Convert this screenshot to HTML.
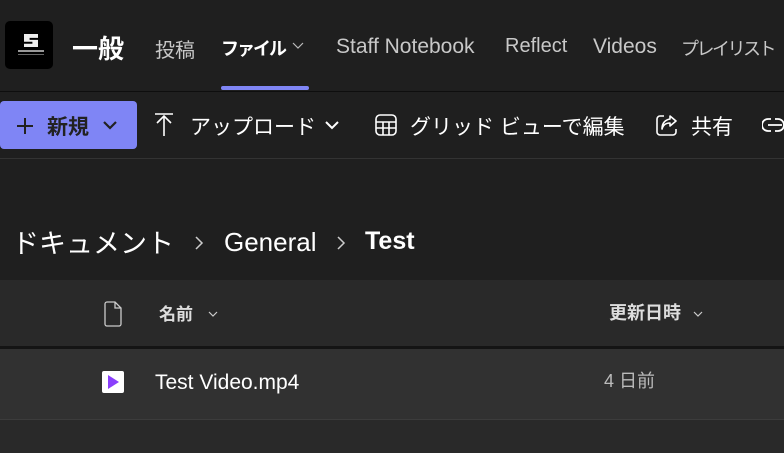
<!DOCTYPE html>
<html><head><meta charset="utf-8"><style>
*{margin:0;padding:0;box-sizing:border-box}
body{width:784px;height:453px;overflow:hidden;background:#1f1f1f;color:#fff;font-family:"Liberation Sans","Noto Sans CJK JP",sans-serif;position:relative}
.a{position:absolute;white-space:nowrap}
svg{position:absolute}
</style></head><body>
<div class="a" style="left:5px;top:21px;width:48px;height:48px;background:#000;border-radius:5px"></div>
<div class="a" style="left:24px;top:34px;width:14px;height:13px;background:#eee;clip-path:polygon(0 0,100% 0,100% 30%,40% 30%,40% 45%,100% 45%,100% 100%,0 100%,0 75%,60% 75%,60% 60%,0 60%)"></div>
<div class="a" style="left:18px;top:50px;width:26px;height:2px;background:#999"></div>
<div class="a" style="left:18px;top:54px;width:26px;height:1px;background:#666"></div>
<div class="a" style="left:72px;top:29px;font-size:26px;font-weight:bold">一般</div>
<div class="a" style="left:155px;top:34px;font-size:20px;color:#c8c8c8">投稿</div>
<div class="a" style="left:221px;top:35px;font-size:18px;font-weight:bold;letter-spacing:-2px">ファイル</div>
<svg style="left:292px;top:42px" width="12" height="8"><path d="M1 1l5 5 5-5" stroke="#bbb" fill="none" stroke-width="1.2"/></svg>
<div class="a" style="left:221px;top:86px;width:88px;height:4px;background:#7f85f5;border-radius:2px"></div>
<div class="a" style="left:336px;top:35px;font-size:21px;color:#c8c8c8">Staff Notebook</div>
<div class="a" style="left:505px;top:35px;font-size:20px;color:#c8c8c8">Reflect</div>
<div class="a" style="left:593px;top:35px;font-size:21px;color:#c8c8c8">Videos</div>
<div class="a" style="left:681px;top:35px;font-size:18px;color:#c8c8c8;letter-spacing:-2.5px">プレイリスト</div>
<div class="a" style="left:0;top:91px;width:784px;height:1px;background:#0e0e0e"></div>
<div class="a" style="left:0;top:101px;width:137px;height:48px;background:#7f85f5;border-radius:4px"></div>
<svg style="left:16px;top:117px" width="18" height="18"><path d="M9 1v16M1 9h16" stroke="#222" stroke-width="2"/></svg>
<div class="a" style="left:47px;top:111px;font-size:21px;font-weight:bold;color:#222">新規</div>
<svg style="left:103px;top:120px" width="14" height="10"><path d="M1 2l6 6 6-6" stroke="#222" fill="none" stroke-width="2.2"/></svg>
<svg style="left:154px;top:112px" width="20" height="26"><path d="M1 2h18M10 4v20M3 11l7-7 7 7" stroke="#fff" fill="none" stroke-width="1.6"/></svg>
<div class="a" style="left:190px;top:111px;font-size:21px">アップロード</div>
<svg style="left:325px;top:120px" width="14" height="10"><path d="M1 2l6 6 6-6" stroke="#fff" fill="none" stroke-width="2"/></svg>
<svg style="left:375px;top:114px" width="22" height="22"><rect x="1" y="1" width="20" height="20" rx="4" stroke="#fff" fill="none" stroke-width="1.6"/><path d="M1 8h20M1 14h20M8 8v13M14 8v13" stroke="#fff" stroke-width="1.6"/></svg>
<div class="a" style="left:410px;top:111px;font-size:21px">グリッド ビューで編集</div>
<svg style="left:655px;top:113px" width="24" height="24"><path d="M9 3H5a3 3 0 0 0-3 3v13a3 3 0 0 0 3 3h13a3 3 0 0 0 3-3v-3" stroke="#fff" fill="none" stroke-width="1.6"/><path d="M15 3l6 5-6 5v-3c-4 0-7 2-8 6 0-6 3-9 8-10z" stroke="#fff" fill="none" stroke-width="1.6" stroke-linejoin="round"/></svg>
<div class="a" style="left:691px;top:111px;font-size:21px">共有</div>
<svg style="left:762px;top:117px" width="22" height="16"><path d="M9 2H6a6 6 0 0 0 0 12h3M13 2h3a6 6 0 0 1 0 12h-3M6 8h14" stroke="#fff" fill="none" stroke-width="1.8"/></svg>
<div class="a" style="left:0;top:158px;width:784px;height:1px;background:#333"></div>
<div class="a" style="left:12px;top:222px;font-size:27px">ドキュメント</div>
<svg style="left:194px;top:235px" width="10" height="16"><path d="M2 2l6 6-6 6" stroke="#ccc" fill="none" stroke-width="1.5"/></svg>
<div class="a" style="left:224px;top:227px;font-size:26px">General</div>
<svg style="left:336px;top:235px" width="10" height="16"><path d="M2 2l6 6-6 6" stroke="#ccc" fill="none" stroke-width="1.5"/></svg>
<div class="a" style="left:365px;top:227px;font-size:25px;font-weight:bold">Test</div>
<div class="a" style="left:0;top:280px;width:784px;height:66px;background:#292929"></div>
<svg style="left:103px;top:301px" width="20" height="26"><path d="M2 3a2 2 0 0 1 2-2h8l6 6v16a2 2 0 0 1-2 2H4a2 2 0 0 1-2-2z M12 1v6h6" stroke="#ccc" fill="none" stroke-width="1.3"/></svg>
<div class="a" style="left:159px;top:300px;font-size:17px;font-weight:bold;color:#ddd">名前</div>
<svg style="left:208px;top:311px" width="10" height="7"><path d="M1 1l4 4 4-4" stroke="#ccc" fill="none" stroke-width="1.2"/></svg>
<div class="a" style="left:609px;top:299px;font-size:18px;font-weight:bold;color:#ddd">更新日時</div>
<svg style="left:693px;top:311px" width="10" height="7"><path d="M1 1l4 4 4-4" stroke="#ccc" fill="none" stroke-width="1.2"/></svg>
<div class="a" style="left:0;top:346px;width:784px;height:3px;background:#141414"></div>
<div class="a" style="left:0;top:349px;width:784px;height:70px;background:#313131"></div>
<div class="a" style="left:102px;top:371px;width:22px;height:22px;background:#fff;border-radius:2px"></div>
<svg style="left:107px;top:375px" width="12" height="14"><path d="M1 0v14l11-7z" fill="#8a3ffc"/></svg>
<div class="a" style="left:155px;top:371px;font-size:21px">Test Video.mp4</div>
<div class="a" style="left:604px;top:367px;font-size:18px;color:#bbb">4 日前</div>
<div class="a" style="left:0;top:419px;width:784px;height:1px;background:#3c3c3c"></div>
<div class="a" style="left:0;top:420px;width:784px;height:33px;background:#292929"></div>
</body></html>
